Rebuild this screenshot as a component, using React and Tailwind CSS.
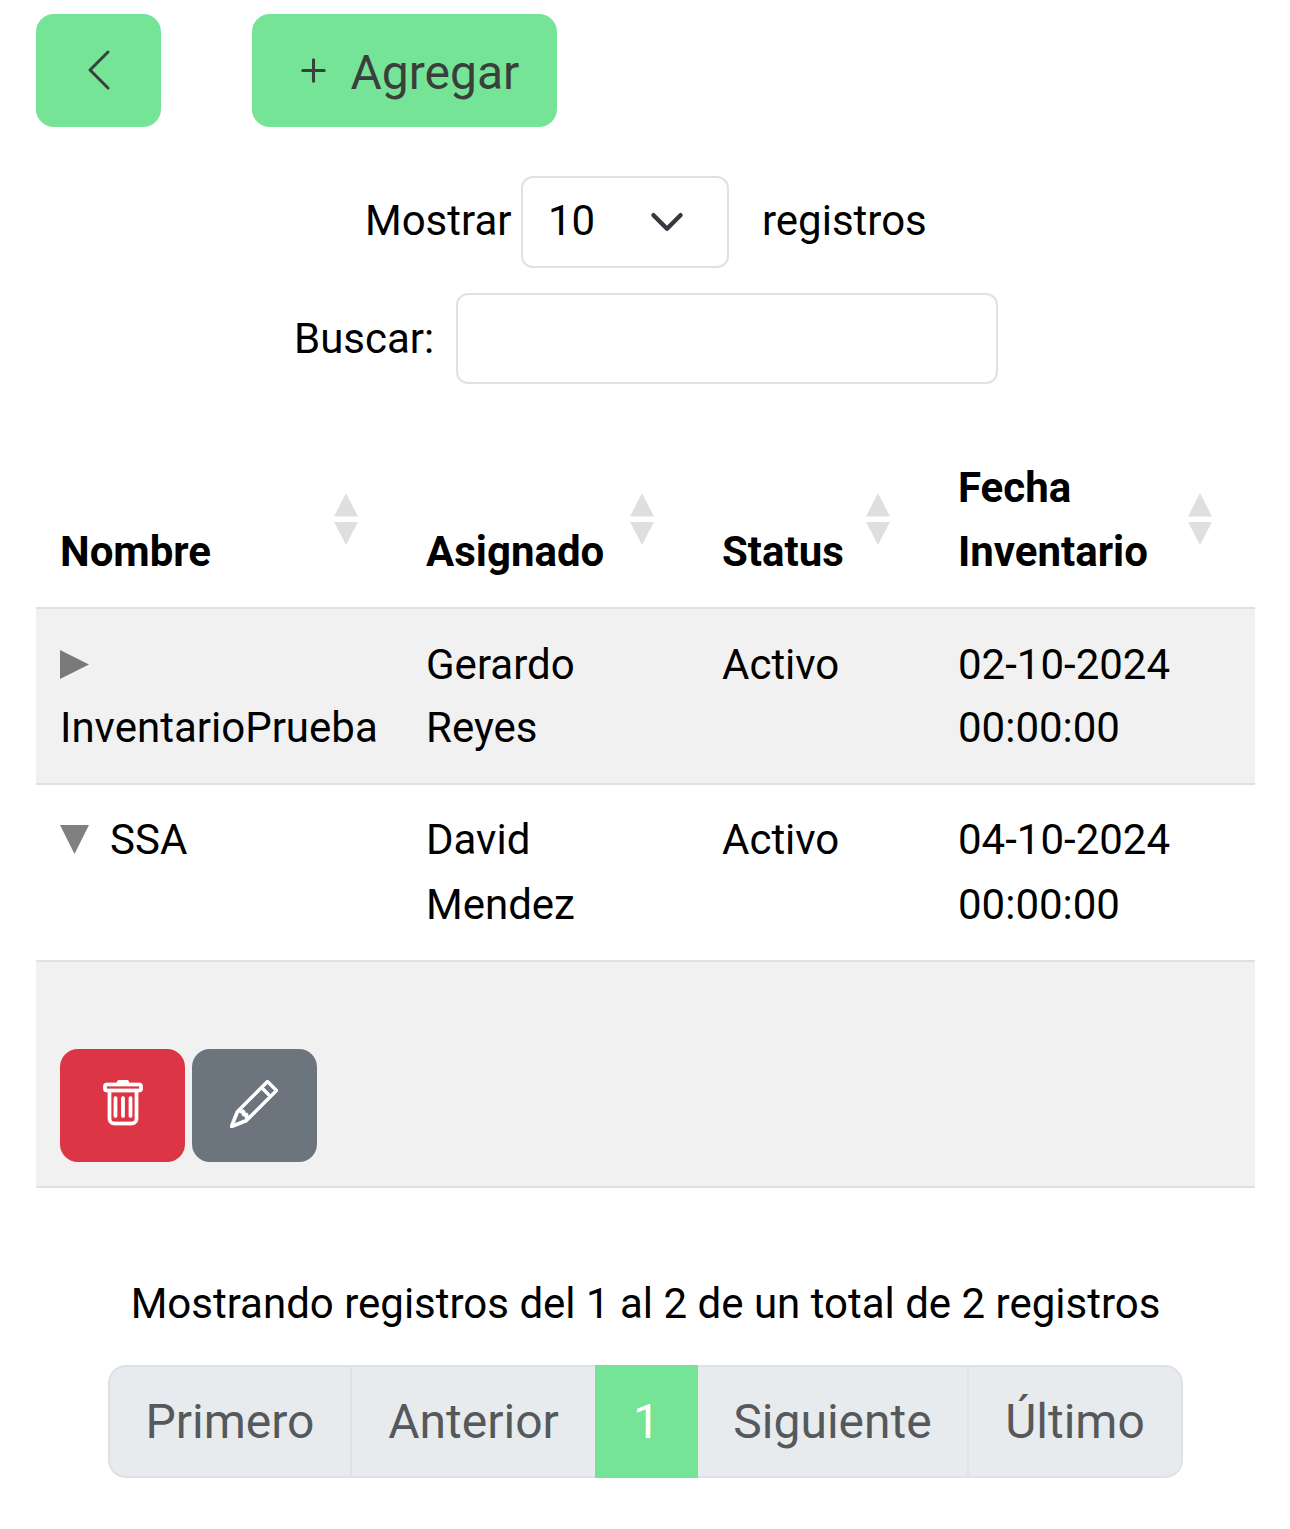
import React from "react";
import { BsChevronLeft, BsPlus, BsTrash, BsPencil } from "react-icons/bs";

const columns = [
  { label: "Nombre", width: "w-[366px]", arrow: "right-[44px]" },
  { label: "Asignado", width: "w-[296px]", arrow: "right-[44px]" },
  { label: "Status", width: "w-[236px]", arrow: "right-[44px]" },
  { label: "Fecha Inventario", width: "w-[321px]", arrow: "right-[43px]" },
];

function SortArrows({ className }) {
  return (
    <svg viewBox="0 0 24 52" className={`absolute top-[59px] h-[52px] w-6 fill-[#dfdfdf] ${className}`}>
      <path d="M12 0 24 23.5H0z" />
      <path d="M0 29h24L12 52z" />
    </svg>
  );
}

function Row({ name, person, date, open }) {
  const cell = `border-b-2 border-[#dee0e2] px-6 align-top ${open ? "pt-[22px]" : "pt-[24px]"}`;
  return (
    <tr className={open ? "h-[177px] bg-white leading-[65px]" : "h-[176px] bg-[#f1f1f1] leading-[63px]"}>
      <td className={cell}>
        {open ? (
          <div className="flex items-start">
            <svg viewBox="0 0 29 29" className="mt-[18px] mr-[21px] size-[29px] fill-[#808080]">
              <path d="M0 0h29L14.5 29z" />
            </svg>
            {name}
          </div>
        ) : (
          <>
            <svg viewBox="0 0 29 29" className="mt-[17px] mb-[17px] size-[29px] fill-[#797979]">
              <path d="M0 0v29L29 14.5z" />
            </svg>
            <div>{name}</div>
          </>
        )}
      </td>
      <td className={cell}>{person}</td>
      <td className={cell}>Activo</td>
      <td className={cell}>{date} 00:00:00</td>
    </tr>
  );
}

const pageCell = "flex items-center justify-center border-y-2 border-[#dee2e6] bg-[#e8ebee] text-[#55595c]";

export default function App() {
  return (
    <main className="h-[1529px] w-[1290px] overflow-hidden bg-white px-9 pt-[14px] font-['Roboto',sans-serif] text-[42px] leading-[64px] text-black">
      <div className="flex h-[113px] gap-[91px] text-[48px] text-[#3a3f3c]">
        <button aria-label="Regresar" className="flex w-[125px] justify-center rounded-[18px] bg-[#76e497] pt-[32px]">
          <BsChevronLeft className="size-12" />
        </button>
        <button className="flex w-[305px] rounded-[18px] bg-[#76e497] pt-[27px] pl-[37px]">
          <BsPlus className="mt-[5px] mr-[12.5px] size-[49px]" />
          <span>Agregar</span>
        </button>
      </div>

      <div className="mt-[49px] flex h-[92px] pl-[329px]">
        <span className="w-[156px] pt-[13px]">Mostrar</span>
        <div className="flex w-[208px] justify-between rounded-[12px] border-2 border-[#dee2e6] pt-[11px] pr-[42px] pl-[25px]">
          <span>10</span>
          <svg viewBox="0 0 16 16" className="mt-[15px] size-9 fill-none stroke-[#343a40]" strokeWidth="2" strokeLinecap="round" strokeLinejoin="round">
            <path d="m2 5 6 6 6-6" />
          </svg>
        </div>
        <span className="pt-[13px] pl-[33px]">registros</span>
      </div>

      <div className="mt-[25px] flex h-[91px] pl-[258px]">
        <label htmlFor="buscar" className="w-[162px] pt-[14px]">Buscar:</label>
        <input id="buscar" className="w-[542px] rounded-[12px] border-2 border-[#dee2e6]" />
      </div>

      <table className="mt-[50px] w-[1219px] table-fixed border-separate border-spacing-0 text-left">
        <thead>
          <tr className="h-[175px]">
            {columns.map((c) => (
              <th key={c.label} className={`relative border-b-2 border-[#dee0e2] pr-[84px] pb-[23px] pl-6 align-bottom font-bold ${c.width}`}>
                {c.label}
                <SortArrows className={c.arrow} />
              </th>
            ))}
          </tr>
        </thead>
        <tbody>
          <Row name="InventarioPrueba" person="Gerardo Reyes" date="02-10-2024" />
          <Row name="SSA" person="David Mendez" date="04-10-2024" open />
          <tr className="h-[226px] bg-[#f1f1f1]">
            <td colSpan={4} className="border-b-2 border-[#dee0e2] px-6 pt-[87px] align-top">
              <div className="flex h-[113px] gap-[7px] text-white">
                <button aria-label="Eliminar" className="flex w-[125px] justify-center rounded-[18px] bg-[#dc3545] pt-[31px]">
                  <BsTrash className="size-12" strokeWidth="0.25" />
                </button>
                <button aria-label="Editar" className="flex w-[125px] justify-center rounded-[18px] bg-[#6c757d] pt-[31px]">
                  <BsPencil className="-ml-[2px] size-12" strokeWidth="0.25" />
                </button>
              </div>
            </td>
          </tr>
        </tbody>
      </table>

      <p className="mt-[84px] pl-px text-center whitespace-nowrap">Mostrando registros del 1 al 2 de un total de 2 registros</p>

      <nav className="mt-[29px] ml-[72px] flex h-[113px] w-[1075px] text-[48px]">
        <span className={`${pageCell} w-[244px] rounded-l-[18px] border-x-2`}>Primero</span>
        <span className={`${pageCell} w-[243px]`}>Anterior</span>
        <span className="flex w-[103px] items-center justify-center bg-[#76e497] text-white">1</span>
        <span className={`${pageCell} w-[269px]`}>Siguiente</span>
        <span className={`${pageCell} w-[216px] rounded-r-[18px] border-x-2`}>Último</span>
      </nav>
    </main>
  );
}
